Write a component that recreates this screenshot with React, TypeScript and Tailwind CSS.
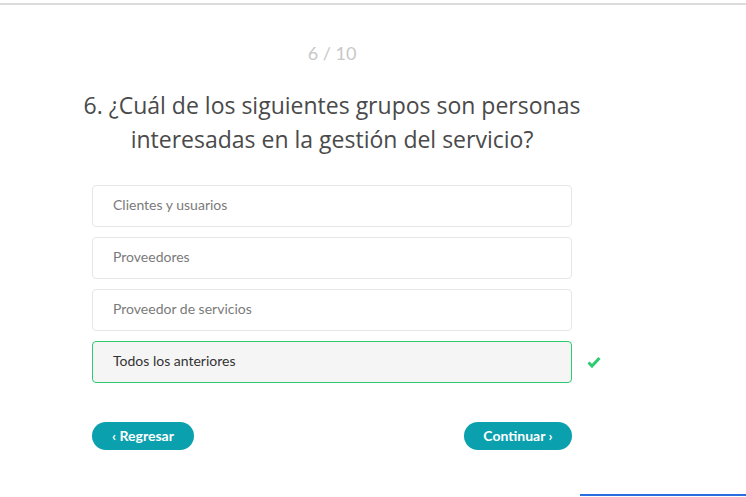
import React from "react";

const options = [
  "Clientes y usuarios",
  "Proveedores",
  "Proveedor de servicios",
  "Todos los anteriores",
];

export default function App() {
  return (
    <div
      className="relative h-[497px] w-[746px] overflow-hidden bg-white"
      style={{ fontFamily: "Lato, 'Open Sans', sans-serif" }}
    >
      <div className="mt-[3px] h-[2px] w-full bg-[#dcdcdc]" />
      <div className="ml-[92px] w-[480px]">
        <div className="mt-[34px] text-center text-[18px] leading-[28px] text-[#c8c8c8]">
          6 / 10
        </div>
        <div
          className="-mx-[20px] mt-[21px] text-center text-[23px] leading-[34px] text-[#4a4a4a]"
          style={{ fontFamily: "'Open Sans', Lato, sans-serif" }}
        >
          6. ¿Cuál de los siguientes grupos son personas interesadas en la gestión del servicio?
        </div>
        <div className="mt-[29px] flex flex-col gap-[10px]">
          {options.map((o, i) => {
            const sel = i === 3;
            return (
              <div key={o} className="relative">
                <div
                  className={
                    sel
                      ? "flex h-[42px] items-center rounded-[4px] border border-[#2ecc71] bg-[#f5f5f5] pb-[3px] pl-[20px] text-[14px] text-[#333333]"
                      : "flex h-[42px] items-center rounded-[4px] border border-[#e6e6e6] bg-white pb-[3px] pl-[20px] text-[14px] text-[#7a7a7a]"
                  }
                >
                  {o}
                </div>
                {sel && (
                  <svg
                    className="absolute left-[495px] top-[15px]"
                    width="14"
                    height="12"
                    viewBox="0 0 14 12"
                  >
                    <path
                      d="M1.5 6.5 L5 10 L12.5 2"
                      fill="none"
                      stroke="#2ecc71"
                      strokeWidth="3"
                    />
                  </svg>
                )}
              </div>
            );
          })}
        </div>
        <div className="mt-[39px] flex justify-between">
          <button className="h-[28px] w-[102px] rounded-full bg-[#0aa0ae] pb-[1px] text-[14px] font-bold text-white">
            ‹ Regresar
          </button>
          <button className="h-[28px] w-[108px] rounded-full bg-[#0aa0ae] pb-[1px] text-[14px] font-bold text-white">
            Continuar ›
          </button>
        </div>
      </div>
      <div className="absolute bottom-[1px] left-[580px] h-[2px] w-[166px] bg-[#2a6de0]" />
    </div>
  );
}
